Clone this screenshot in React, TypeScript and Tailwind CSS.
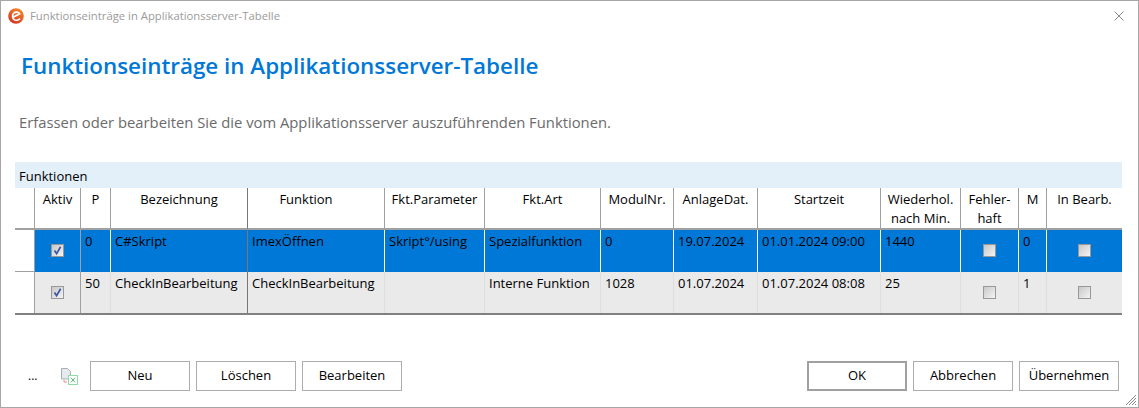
import React from "react";

const headerCell = "border-r border-b-2 border-[#a0a0a0] text-center pt-[2px] whitespace-nowrap";

function Check({ checked }: { checked: boolean }) {
  return (
    <div className="w-[13px] h-[13px] border border-[#989898] bg-gradient-to-br from-[#c8c8c8] to-[#f4f4f4] flex items-center justify-center">
      {checked && (
        <svg width="11" height="11" viewBox="0 0 11 11">
          <path d="M2.5 5.5 L4.6 8.6 L8.6 1.8" fill="none" stroke="#3d55a5" strokeWidth="1.7" />
        </svg>
      )}
    </div>
  );
}

function Logo() {
  return (
    <svg width="16" height="16" viewBox="0 0 16 16">
      <defs>
        <linearGradient id="logoFill" x1="0.8" y1="0" x2="0.2" y2="1">
          <stop offset="0" stopColor="#f58a2a" />
          <stop offset="1" stopColor="#cf3326" />
        </linearGradient>
      </defs>
      <circle cx="8" cy="8" r="7.8" fill="url(#logoFill)" />
      <path d="M4.6 9.4 L11.6 5.8 C10.6 3.9 7.6 3.6 5.8 5.2 C4 7 4.2 10.2 6.2 11.6 C8 12.8 10.6 12.2 12 10.4" fill="none" stroke="#fff" strokeWidth="1.7" />
    </svg>
  );
}

function ExcelIcon() {
  return (
    <svg width="18" height="19" viewBox="0 0 18 19">
      <path d="M1.5 1.5 H7.5 L10.5 4.5 V12 H1.5 Z" fill="#e6e9ee" stroke="#a8adb5" />
      <path d="M4 13 V15 H7" fill="none" stroke="#ef8a8a" strokeWidth="1" />
      <rect x="8.5" y="8.5" width="9" height="9" fill="#fff" stroke="#8fdca8" />
      <path d="M11 10.8 L15 15.4 M15 10.8 L11 15.4" stroke="#58b878" strokeWidth="1" />
    </svg>
  );
}

function Btn({ label, primary }: { label: string; primary?: boolean }) {
  return (
    <button
      className={
        "w-[100px] h-[30px] bg-white text-[13px] text-black " +
        (primary ? "border-2 border-[#a0a0a0]" : "border border-[#adadad]")
      }
    >
      {label}
    </button>
  );
}

const rows = [
  {
    aktiv: true, p: "0", bez: "C#Skript", fkt: "ImexÖffnen", param: "Skript°/using", art: "Spezialfunktion",
    modul: "0", anlage: "19.07.2024", start: "01.01.2024 09:00", wied: "1440", m: "0", selected: true,
  },
  {
    aktiv: true, p: "50", bez: "CheckInBearbeitung", fkt: "CheckInBearbeitung", param: "", art: "Interne Funktion",
    modul: "1028", anlage: "01.07.2024", start: "01.07.2024 08:08", wied: "25", m: "1", selected: false,
  },
];

export default function App() {
  return (
    <div className="w-[1139px] h-[408px] bg-white border border-[#a6a6a6] flex flex-col overflow-hidden relative font-['Open_Sans',sans-serif] text-[13px] text-black">
      <div className="h-[30px] flex items-center pl-[7px] pr-[14px] text-[#9b9b9b] text-[11.3px]">
        <Logo />
        <span className="ml-[6px]">Funktionseinträge in Applikationsserver-Tabelle</span>
        <svg className="ml-auto" width="10" height="10" viewBox="0 0 10 10">
          <path d="M0.5 0.5 L9.5 9.5 M9.5 0.5 L0.5 9.5" stroke="#8c8c8c" strokeWidth="1" />
        </svg>
      </div>

      <h1 className="ml-[20px] mt-[19px] text-[22.4px] leading-[32px] font-semibold text-[#0078d7]">
        Funktionseinträge in Applikationsserver-Tabelle
      </h1>
      <p className="ml-[18px] mt-[30px] text-[14.8px] leading-[20px] text-[#6b6b6b]">
        Erfassen oder bearbeiten Sie die vom Applikationsserver auszuführenden Funktionen.
      </p>

      <div className="mx-[14px] mt-[30px] w-[1107px]">
        <div className="h-[26px] bg-[#e3eff9] pl-[4px] flex items-center pt-[3px]">Funktionen</div>

        <div className="grid grid-cols-[20px_46px_30px_137px_137px_100px_116px_73px_84px_123px_80px_58px_28px_75px] leading-[19px]">
          <div className="h-[42px] border-r border-b-2 border-[#a0a0a0]" />
          <div className={headerCell}>Aktiv</div>
          <div className={headerCell}>P</div>
          <div className="border-r border-r-[#777777] border-b-2 border-b-[#a0a0a0] text-center pt-[2px]">Bezeichnung</div>
          <div className={headerCell + " pr-[20px]"}>Funktion</div>
          <div className={headerCell}>Fkt.Parameter</div>
          <div className={headerCell}>Fkt.Art</div>
          <div className={headerCell}>ModulNr.</div>
          <div className={headerCell}>AnlageDat.</div>
          <div className={headerCell}>Startzeit</div>
          <div className={headerCell}>Wiederhol.<br />nach Min.</div>
          <div className={headerCell}>Fehler-<br />haft</div>
          <div className={headerCell}>M</div>
          <div className="text-center pt-[2px] border-b-2 border-[#a0a0a0]">In Bearb.</div>

          {rows.map((r) => {
            const bg = r.selected ? "bg-[#0078d7]" : "bg-[#eaeaea]";
            const sep = r.selected ? "border-white" : "border-[#dedede]";
            const h = r.selected ? "h-[42px]" : "h-[41px]";
            const cell = `${bg} ${sep} ${h} border-r pl-[4px] pt-[2px] whitespace-nowrap`;
            const checkCell = `${bg} ${sep} ${h} border-r flex justify-center pt-[14px]`;
            return (
              <React.Fragment key={r.p}>
                <div className={`${h} border-r border-[#a0a0a0] ` + (r.selected ? "border-b" : "")} />
                <div className={`${bg} ${h} border-r border-[#a0a0a0] flex justify-center pt-[14px]`}><Check checked={r.aktiv} /></div>
                <div className={cell}>{r.p}</div>
                <div className={`${bg} ${h} border-r border-[#777777] pl-[4px] pt-[2px] whitespace-nowrap`}>{r.bez}</div>
                <div className={cell}>{r.fkt}</div>
                <div className={cell}>{r.param}</div>
                <div className={cell}>{r.art}</div>
                <div className={cell}>{r.modul}</div>
                <div className={cell}>{r.anlage}</div>
                <div className={cell}>{r.start}</div>
                <div className={cell}>{r.wied}</div>
                <div className={checkCell}><Check checked={false} /></div>
                <div className={cell}>{r.m}</div>
                <div className={`${bg} ${h} flex justify-center pt-[14px] pr-[1px]`}><Check checked={false} /></div>
              </React.Fragment>
            );
          })}
        </div>
        <div className="h-[2px] bg-[#808080]" />
      </div>

      <div className="mt-[46px] pl-[27px] pr-[19px] flex items-center">
        <span className="w-[32px] text-[12px]">...</span>
        <ExcelIcon />
        <div className="ml-[12px] flex gap-[6px]">
          <Btn label="Neu" />
          <Btn label="Löschen" />
          <Btn label="Bearbeiten" />
        </div>
        <div className="ml-auto flex gap-[6px]">
          <Btn label="OK" primary />
          <Btn label="Abbrechen" />
          <Btn label="Übernehmen" />
        </div>
      </div>

      <svg className="absolute right-[1px] bottom-[1px]" width="12" height="12" viewBox="0 0 12 12">
        <path d="M11 1 L1 11 M11 4 L4 11 M11 7 L7 11 M11 10 L10 11" stroke="#8a8a8a" strokeWidth="1" />
      </svg>
    </div>
  );
}
